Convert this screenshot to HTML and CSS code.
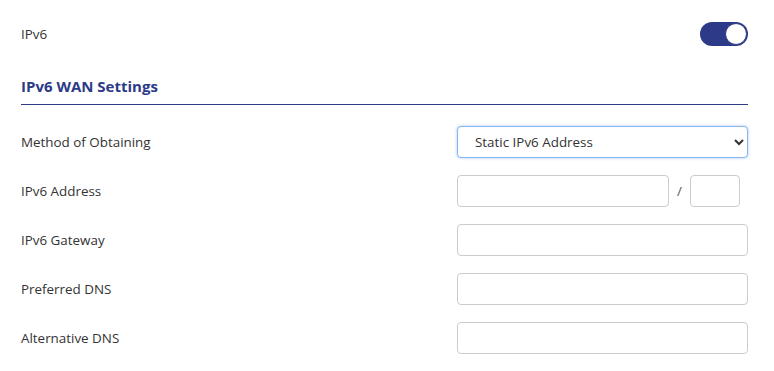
FILE: index.html
```html
<!DOCTYPE html>
<html>
	<head>
		<meta charset="UTF-8">
		<title>IPv6 WAN Settings</title>
		<link rel="stylesheet" href="styles.css">
	</head>
	<body>
		<div class="panel">
			<div class="row top">
				<span class="label">IPv6</span>
				<span class="toggle on"><span class="knob"></span></span>
			</div>

			<h2 class="section">IPv6 WAN Settings</h2>

			<div class="form">
				<div class="row">
					<span class="label">Method of Obtaining</span>
					<div class="field">
						<select class="select">
							<option>Static IPv6 Address</option>
						</select>
					</div>
				</div>
				<div class="row">
					<span class="label">IPv6 Address</span>
					<div class="field split">
						<input class="input" type="text">
						<span class="slash">/</span>
						<input class="input prefix" type="text">
					</div>
				</div>
				<div class="row">
					<span class="label">IPv6 Gateway</span>
					<div class="field"><input class="input" type="text"></div>
				</div>
				<div class="row">
					<span class="label">Preferred DNS</span>
					<div class="field"><input class="input" type="text"></div>
				</div>
				<div class="row">
					<span class="label">Alternative DNS</span>
					<div class="field"><input class="input" type="text"></div>
				</div>
			</div>
		</div>
	</body>
</html>
```

FILE: styles.css
```css
body {
	margin: 0;
	background-color: #ffffff;
	color: #333333;
	font-family: "Open Sans", "Noto Sans", sans-serif;
	font-size: 13.4px;
}
.panel {
	width: 727px;
	margin-left: 21px;
	padding-top: 22px;
}
.row {
	display: flex;
	align-items: center;
	justify-content: space-between;
	height: 32px;
}
.row.top {
	height: 24px;
}
.label {
	color: #333333;
}
/* on/off switch */
.toggle {
	position: relative;
	display: inline-block;
	width: 48px;
	height: 24px;
	border-radius: 12px;
	background-color: #2c3a87;
}
.toggle .knob {
	position: absolute;
	top: 1px;
	right: 1px;
	width: 20px;
	height: 20px;
	border-radius: 50%;
	background-color: #ffffff;
	border: 1px solid #2c3a87;
}
.section {
	margin: 30px 0 0 0;
	padding-bottom: 8px;
	border-bottom: 1px solid #2c3a87;
	color: #2c3a87;
	font-size: 15px;
	font-weight: bold;
}
.form {
	display: flex;
	flex-direction: column;
	gap: 17px;
	margin-top: 21px;
}
.field {
	display: flex;
	align-items: center;
	width: 291px;
}
.select,
.input {
	box-sizing: border-box;
	height: 32px;
	width: 291px;
	margin: 0;
	border: 1px solid #cccccc;
	border-radius: 4px;
	background-color: #ffffff;
	font-family: inherit;
	font-size: 13.4px;
	color: #333333;
}
.select {
	padding-left: 13px;
	border-color: #86b7ee;
	box-shadow: 0 0 3px rgba(80, 140, 230, 0.5);
}
.split .input {
	width: 212px;
}
.split .input.prefix {
	width: 50px;
}
.slash {
	width: 21px;
	text-align: center;
	color: #555555;
}
```
